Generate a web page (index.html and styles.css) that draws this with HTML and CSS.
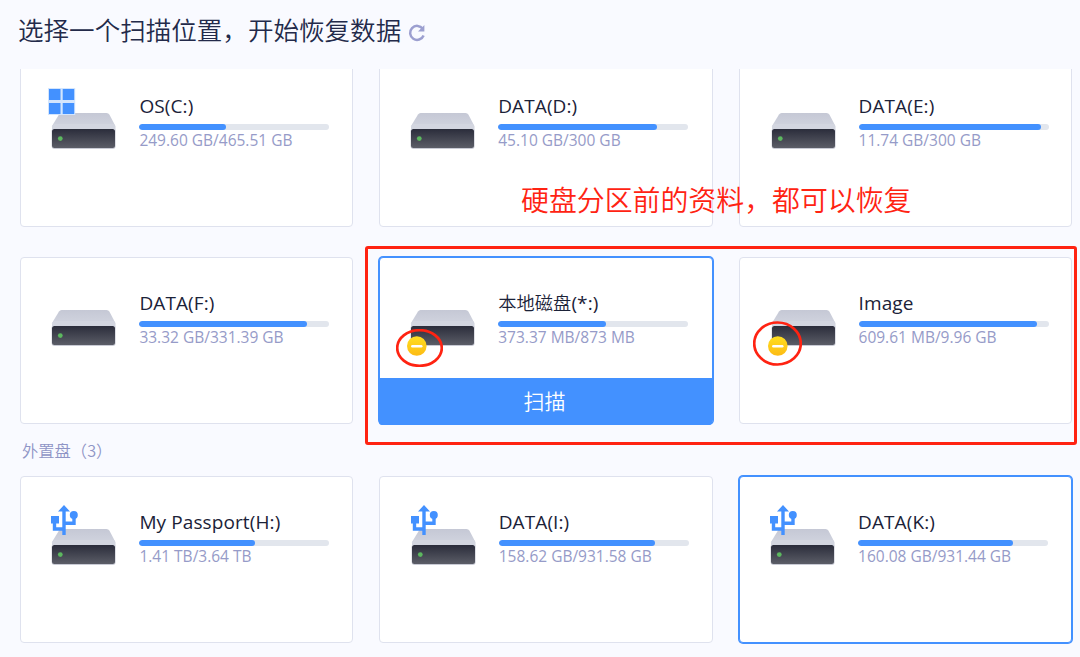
FILE: index.html
```
<!DOCTYPE html>
<html lang="zh-CN">
<head>
  <meta charset="UTF-8" />
  <meta name="viewport" content="width=device-width, initial-scale=1.0"/>
  <title>数据恢复</title>
  <link rel="stylesheet" href="styles.css">
</head>
<body>

  <!-- Shared icons -->
  <svg class="icon-defs" width="0" height="0">
    <defs>
      <linearGradient id="top-fill" x1="0" y1="0" x2="0" y2="1">
        <stop offset="0" stop-color="#c5c8d5"/>
        <stop offset="1" stop-color="#d0d3de"/>
      </linearGradient>
      <linearGradient id="front-fill" x1="0" y1="0" x2="0" y2="1">
        <stop offset="0" stop-color="#2b2d3b"/>
        <stop offset="1" stop-color="#5b5d67"/>
      </linearGradient>
      <linearGradient id="minus-fill" x1="0" y1="0" x2="0" y2="1">
        <stop offset="0" stop-color="#ffdf20"/>
        <stop offset="1" stop-color="#fdbb14"/>
      </linearGradient>
    </defs>
    <symbol id="drive" viewBox="0 0 76 70">
      <path d="M17.5 29h45q2 0 3 1.8L71.4 42H8L15 30.5q1-1.5 2.5-1.5z" fill="url(#top-fill)"/>
      <rect x="7.6" y="44" width="64" height="21" rx="3" fill="#c9cbd5"/>
      <path d="M8 42.5L10 40h60l1.5 2.5v4H8z" fill="#d3d6e0"/>
      <rect x="8" y="45" width="63" height="19" rx="2.5" fill="url(#front-fill)"/>
    </symbol>
    <symbol id="led" viewBox="0 0 76 70">
      <circle cx="16.3" cy="54.6" r="2.4" fill="#5cb85f"/>
    </symbol>
    <symbol id="windows" viewBox="0 0 76 70">
      <rect x="4" y="4" width="27.2" height="27" fill="#d3e5fd"/>
      <path d="M5 5h11.5v11H5zM18.7 5h11.5v11H18.7zM5 19h11.5v11H5zM18.7 19h11.5v11H18.7z" fill="#4391ff"/>
    </symbol>
    <symbol id="usb" viewBox="0 0 76 70">
      <path d="M20 10v25M20 29h-9.5V18M20 23.3h10v-8" fill="none" stroke="#4391ff" stroke-width="3.4"/>
      <path d="M20 5l6 6.5H14zM7 16h8v7.5H7z" fill="#4391ff"/>
      <circle cx="29.8" cy="15" r="4" fill="#4391ff"/>
    </symbol>
    <symbol id="minus" viewBox="0 0 76 70">
      <circle cx="13.8" cy="65" r="9.8" fill="url(#minus-fill)"/>
      <path d="M9.3 65.2h9" stroke="#fff" stroke-width="2.4" stroke-linecap="round"/>
    </symbol>
  </svg>

  <header class="header">
    <h1>选择一个扫描位置，开始恢复数据</h1>
    <svg class="refresh" viewBox="0 0 18 18">
      <path d="M14.8 4.8A7 7 0 1 0 15.6 11.5" fill="none" stroke="#9c9fd0" stroke-width="2.5"/>
      <path d="M16.4 1v6.4H10z" fill="#9c9fd0"/>
    </svg>
  </header>

  <main class="disk-list">
    <section class="disk-grid">
      <div class="card">
        <svg class="disk-icon"><use href="#drive"/><use href="#led"/><use href="#windows"/></svg>
        <div class="disk-info">
          <div class="disk-name">OS(C:)</div>
          <div class="bar"><div class="bar-fill" style="width: 45.8%"></div></div>
          <div class="disk-size">249.60 GB/465.51 GB</div>
        </div>
      </div>
      <div class="card">
        <svg class="disk-icon"><use href="#drive"/><use href="#led"/></svg>
        <div class="disk-info">
          <div class="disk-name">DATA(D:)</div>
          <div class="bar"><div class="bar-fill" style="width: 83.5%"></div></div>
          <div class="disk-size">45.10 GB/300 GB</div>
        </div>
      </div>
      <div class="card">
        <svg class="disk-icon"><use href="#drive"/><use href="#led"/></svg>
        <div class="disk-info">
          <div class="disk-name">DATA(E:)</div>
          <div class="bar"><div class="bar-fill" style="width: 95.8%"></div></div>
          <div class="disk-size">11.74 GB/300 GB</div>
        </div>
      </div>
      <div class="card">
        <svg class="disk-icon"><use href="#drive"/><use href="#led"/></svg>
        <div class="disk-info">
          <div class="disk-name">DATA(F:)</div>
          <div class="bar"><div class="bar-fill" style="width: 88.4%"></div></div>
          <div class="disk-size">33.32 GB/331.39 GB</div>
        </div>
      </div>
      <div class="card active">
        <svg class="disk-icon"><use href="#drive"/><use href="#minus"/></svg>
        <div class="disk-info">
          <div class="disk-name"><span class="cn">本地磁盘</span>(*:)</div>
          <div class="bar"><div class="bar-fill" style="width: 56.8%"></div></div>
          <div class="disk-size">373.37 MB/873 MB</div>
        </div>
        <button class="scan-btn">扫描</button>
      </div>
      <div class="card">
        <svg class="disk-icon"><use href="#drive"/><use href="#minus"/></svg>
        <div class="disk-info">
          <div class="disk-name">Image</div>
          <div class="bar"><div class="bar-fill" style="width: 94%"></div></div>
          <div class="disk-size">609.61 MB/9.96 GB</div>
        </div>
      </div>
    </section>

    <h2 class="group-title">外置盘（3）</h2>

    <section class="disk-grid">
      <div class="card">
        <svg class="disk-icon"><use href="#drive"/><use href="#led"/><use href="#usb"/></svg>
        <div class="disk-info">
          <div class="disk-name">My Passport(H:)</div>
          <div class="bar"><div class="bar-fill" style="width: 61%"></div></div>
          <div class="disk-size">1.41 TB/3.64 TB</div>
        </div>
      </div>
      <div class="card">
        <svg class="disk-icon"><use href="#drive"/><use href="#led"/><use href="#usb"/></svg>
        <div class="disk-info">
          <div class="disk-name">DATA(I:)</div>
          <div class="bar"><div class="bar-fill" style="width: 82%"></div></div>
          <div class="disk-size">158.62 GB/931.58 GB</div>
        </div>
      </div>
      <div class="card active">
        <svg class="disk-icon"><use href="#drive"/><use href="#led"/><use href="#usb"/></svg>
        <div class="disk-info">
          <div class="disk-name">DATA(K:)</div>
          <div class="bar"><div class="bar-fill" style="width: 81.8%"></div></div>
          <div class="disk-size">160.08 GB/931.44 GB</div>
        </div>
      </div>
    </section>
  </main>

  <!-- Red notes on top of the list -->
  <div class="note-text">硬盘分区前的资料，都可以恢复</div>
  <div class="note-box"></div>
  <svg class="note-circle circle-local"><ellipse cx="50%" cy="50%" rx="22.3" ry="17.8"/></svg>
  <svg class="note-circle circle-image"><ellipse cx="50%" cy="50%" rx="23.3" ry="21"/></svg>

</body>
</html>
```
FILE: styles.css
```
* {
  margin: 0;
  padding: 0;
  box-sizing: border-box;
}

body {
  font-family: "Open Sans", "Noto Sans CJK SC", sans-serif;
  background-color: #f9faff;
  color: #1b2238;
  height: 657px;
  overflow: hidden;
  position: relative;
}

.icon-defs {
  position: absolute;
}

.header {
  height: 69px;
  padding: 0 0 11px 18px;
  display: flex;
  align-items: center;
  gap: 7px;
}

h1 {
  font-family: "Noto Sans CJK SC", sans-serif;
  font-size: 25.55px;
  font-weight: 350;
  line-height: 40px;
  color: #232a4a;
}

.refresh {
  width: 18px;
  height: 18px;
  margin-top: 8px;
}

.disk-list {
  height: 588px;
  padding-left: 20px;
  overflow: hidden;
}

.disk-grid {
  width: 1052px;
  display: grid;
  grid-template-columns: repeat(3, 1fr);
  gap: 30px 26px;
}

/* list is scrolled a little, first row is cut off at the top */
.disk-grid:first-child {
  margin-top: -9px;
}

.card {
  height: 167px;
  background-color: #fff;
  border: 1px solid #dfe2ee;
  border-radius: 4px;
  padding: 23px 0 0 23.4px;
  display: flex;
  flex-wrap: wrap;
  align-content: flex-start;
  gap: 0 19px;
}

.card.active {
  border-color: #4391ff;
  box-shadow: 0 0 0 1px #4391ff;
}

.disk-icon {
  width: 76px;
  height: 70px;
  overflow: visible;
}

symbol {
  overflow: visible;
}

.disk-info {
  width: 190px;
  padding-top: 9px;
}

.disk-name {
  font-size: 19px;
  letter-spacing: 0.1px;
  line-height: 26px;
  height: 31px;
  white-space: nowrap;
}

.cn {
  font-size: 18.2px;
  font-weight: 350;
}

.bar {
  height: 6px;
  border-radius: 3px;
  background-color: #e2e6ed;
  overflow: hidden;
}

.bar-fill {
  height: 100%;
  border-radius: 3px;
  background-color: #4391ff;
}

.disk-size {
  margin-top: -1px;
  font-size: 15.5px;
  line-height: 22px;
  color: #969bc8;
  white-space: nowrap;
}

.scan-btn {
  width: 333.3px;
  height: 47px;
  margin: 27px 0 0 -24.4px;
  padding: 0 2px 3px 0;
  border: none;
  border-radius: 0 0 3px 3px;
  background-color: #4391ff;
  color: #fff;
  font-family: "Noto Sans CJK SC", sans-serif;
  font-size: 21px;
  font-weight: 350;
}

.group-title {
  padding-left: 2px;
  font-family: "Noto Sans CJK SC", sans-serif;
  font-size: 16.3px;
  font-weight: 350;
  line-height: 52px;
  color: #8f95c6;
}

.note-text {
  position: absolute;
  left: 521px;
  top: 179px;
  font-family: "Noto Sans CJK SC", sans-serif;
  font-size: 27.9px;
  font-weight: 350;
  line-height: 40px;
  color: #ff2312;
  white-space: nowrap;
}

.note-box {
  position: absolute;
  left: 365px;
  top: 246px;
  width: 712px;
  height: 199px;
  border: 3px solid #ff2312;
  border-radius: 3px;
}

.note-circle {
  position: absolute;
  fill: none;
  stroke: #ff2312;
  stroke-width: 2.7px;
}

.circle-local {
  left: 396px;
  top: 329px;
  width: 47px;
  height: 38px;
}

.circle-image {
  left: 753px;
  top: 321px;
  width: 49px;
  height: 45px;
}
```
